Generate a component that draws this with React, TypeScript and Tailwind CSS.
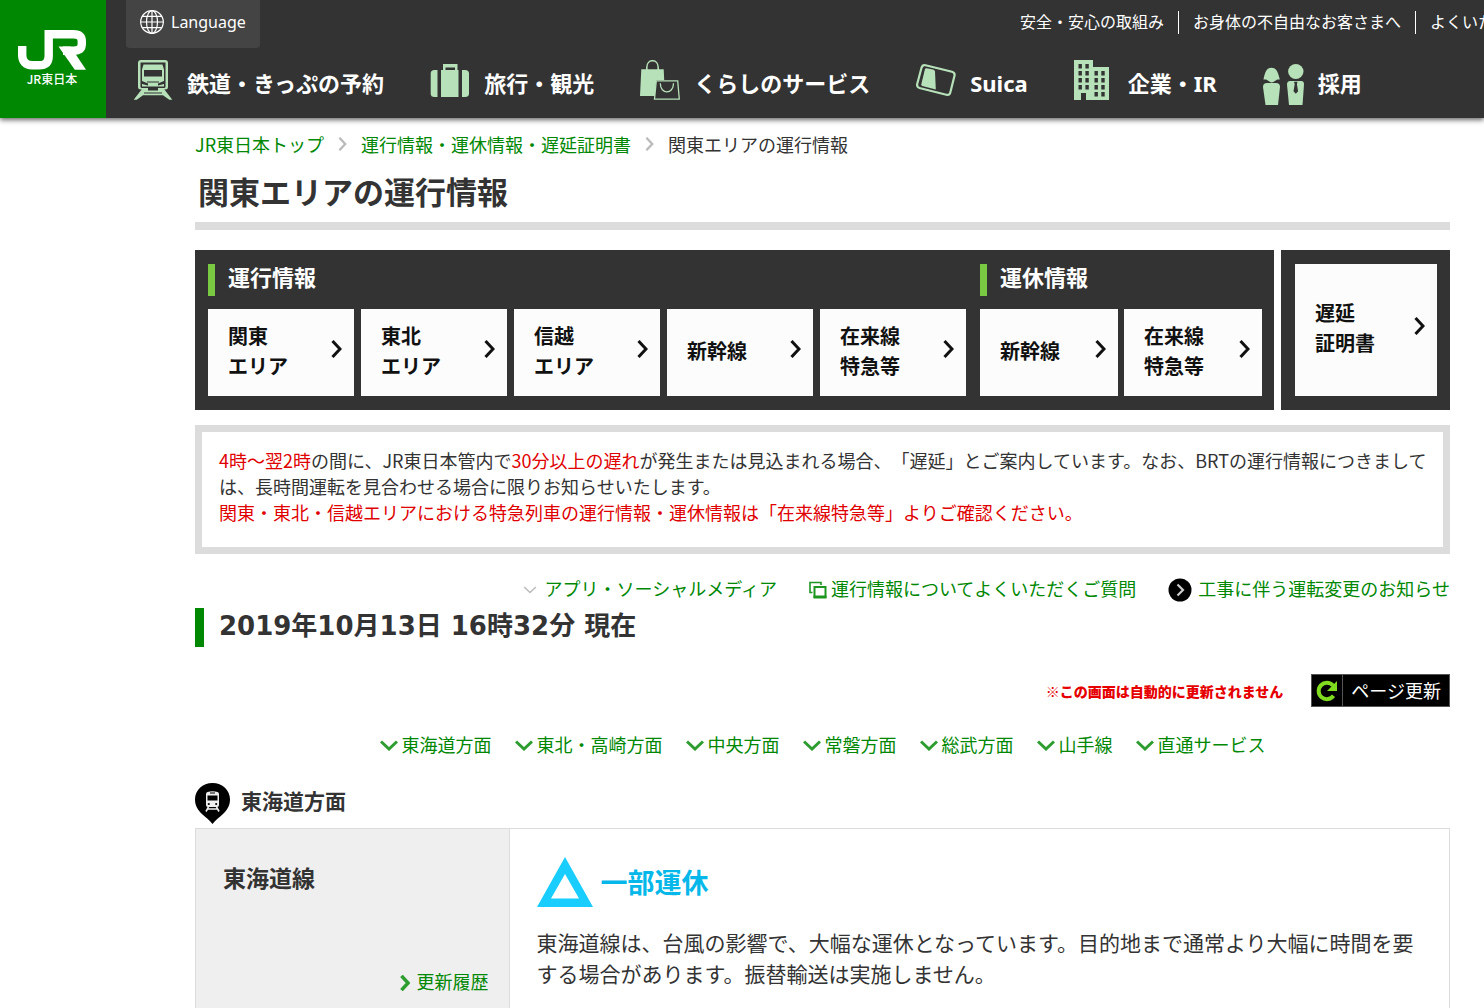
import type { ReactNode } from "react";

const LIGHT = "#b7e1b9";

function JrLogo() {
  return (
    <svg viewBox="0 0 68 40" className="mr-[2px] h-10 w-[68px]" fill="none" stroke="#fff" strokeWidth="8.4" aria-hidden="true">
      <path d="M4.2 16v9c0 6.500 3.500 10.300 10 10.300h6.500c7 0 10-3.300 10-9.300V4.200h24.500c6 0 8.600 2.600 8.600 7.300v2.200c0 4.700-2.800 7-8.600 7H45" />
      <path d="M40.500 16.500h12L68 39.700H56.800z" fill="#fff" stroke="none" />
    </svg>
  );
}

function GlobeIcon() {
  return (
    <svg viewBox="0 0 24 24" className="size-6" fill="none" stroke="#fff" strokeWidth="1.2" aria-hidden="true">
      <circle cx="12" cy="12" r="11.300" />
      <ellipse cx="12" cy="12" rx="5.500" ry="11.300" />
      <path d="M12 .7v22.600M.7 12h22.600M2.300 6.300h19.400M2.300 17.700h19.400" />
    </svg>
  );
}

function TrainIcon() {
  return (
    <svg viewBox="0 0 40 40" className="size-10" aria-hidden="true">
      <path d="M8 0h24q3 0 3 3v24q0 2.500-3 2.500H8q-3 0-3-2.500V3q0-3 3-3z" fill={LIGHT} />
      <path d="M7.500 2.500h25v24q0 1.500-1.500 1.500H9q-1.500 0-1.500-1.500z" fill="#333" />
      <path d="M10.500 4.500h19l1.500 5v17H9v-17z" fill={LIGHT} />
      <path d="M11 10h18v6.500H11zM9 21l6 2.500v2L9 24zM31 21l-6 2.500v2l6-1.500zM14 21.500h12v1H14z" fill="#333" />
      <path d="M9 29l-8.300 10.800h3L9 36h22l5.300 3.800h3L31 29z" fill={LIGHT} />
      <path d="M15 27.800h10v2.600H15zM11 32.500h18v1H11zM9.500 35h21v.8h-21z" fill="#333" />
    </svg>
  );
}

function SuitcaseIcon() {
  return (
    <svg viewBox="0 0 40 40" className="size-10" fill={LIGHT} aria-hidden="true">
      <path d="M7.500 10v27H4.500Q.7 37 .7 33.500v-20Q.7 10 4.500 10zM32 10h3q4 0 4 3.500v20q0 3.500-4 3.500h-3zM11 10h17.500v27H11z" />
      <path d="M13 4h14.500v6.500H25v-3H15.500v3H13z" />
    </svg>
  );
}

function BagsIcon() {
  return (
    <svg viewBox="0 0 40 40" className="size-10" aria-hidden="true">
      <path d="M1.300 9.300h22.400l.5 11h-8L15 36H0z" fill={LIGHT} />
      <path d="M6.800 10V7.500C6.800-1.500 18.200-1.500 18.200 7.500V10" fill="none" stroke={LIGHT} strokeWidth="1.600" />
      <path d="M16.300 20.800h21.400l1.600 18.400H14.500z" fill="#333" stroke={LIGHT} strokeWidth="1.300" />
      <path d="M20.300 23.300c0 11.500 13.200 11.500 13.200 0" fill="none" stroke={LIGHT} strokeWidth="1.300" />
    </svg>
  );
}

function CardIcon() {
  return (
    <svg viewBox="0 0 40 40" className="size-10" aria-hidden="true">
      <path d="M9.500 5.300l26.500 6.500q3.200 1 2.500 4L34.300 32.500q-.8 3-4 2.200L3.500 28Q.5 27 1.200 24L5.500 7.800Q6.500 4.600 9.500 5.300z" fill="none" stroke={LIGHT} strokeWidth="2.200" />
      <path d="M10.500 8.200l6.500 1.200q1.800.5 2 2l.8 18L6.300 26q-1.300-.5-1-1.800L9 9q.4-1 1.500-.8z" fill={LIGHT} />
    </svg>
  );
}

function BuildingIcon() {
  const panes = [
    ...[4, 11, 18, 25].flatMap((y) => [4.5, 11.4].map((x) => ({ x, y }))),
    ...[11, 18, 25, 32].flatMap((y) => [20.5, 27.3].map((x) => ({ x, y }))),
  ];
  return (
    <svg viewBox="0 0 40 40" className="size-10" aria-hidden="true">
      <path d="M0 0h19v7h16v33H12v-7H7v7H0z" fill={LIGHT} />
      {panes.map(({ x, y }) => (
        <rect key={`${x}-${y}`} x={x} y={y} width="3.400" height="4.500" fill="#333" />
      ))}
    </svg>
  );
}

function PeopleIcon() {
  return (
    <svg viewBox="0 -3 41 45" className="h-[45px] w-[41px]" fill={LIGHT} aria-hidden="true">
      <path d="M.5 16.500C2 9 3.500 4.800 8.500 4.800S15 9 16.800 16.500c-3-.3-3.500.5-4.800 1.500a5 5 0 0 1-6.500 0C4.500 17 3.500 16.200.5 16.500z" />
      <path d="M4 20h9q4 0 4 4l-2 18H2.500L0 24q0-4 4-4z" />
      <ellipse cx="32.800" cy="8.500" rx="7.700" ry="7.500" />
      <path d="M27 18h11.500q2.500 0 2.500 3.500L39.500 42H26l-2-20.500q0-3.500 3-3.500z" />
      <path d="M31 18.800h3.500l-.6 2.500 1.200 7-2.300 2.500-2.300-2.500 1.200-7z" fill="#333" />
    </svg>
  );
}

function Chevron({ className, width = 3, down = false }: { className: string; width?: number; down?: boolean }) {
  return (
    <svg viewBox={down ? "0 0 18 11" : "0 0 11 18"} className={className} fill="none" stroke="currentColor" strokeWidth={width} aria-hidden="true">
      <path d={down ? "M1 1.500l8 7.500 8-7.500" : "M1.500 1l7.500 8-7.500 8"} />
    </svg>
  );
}

function WindowsIcon() {
  return (
    <svg viewBox="0 0 18 18" className="mt-[3px] size-[18px] shrink-0" fill="none" stroke="#1c961e" aria-hidden="true">
      <path d="M3.500 11.500H1V1.500h11V4" strokeWidth="1.600" />
      <path d="M5.500 6h11v10h-11z" strokeWidth="2" />
      <path d="M4.500 16h13" strokeWidth="3" />
    </svg>
  );
}

function RoundArrowIcon() {
  return (
    <svg viewBox="0 0 24 24" className="mt-1 size-6 shrink-0" aria-hidden="true">
      <circle cx="12" cy="12" r="11.500" fill="#000" />
      <path d="M9.500 6.500L15 12l-5.500 5.500" fill="none" stroke="#ccc" strokeWidth="2.200" />
    </svg>
  );
}

function ReloadIcon() {
  return (
    <svg viewBox="0 0 24 24" className="size-6" aria-hidden="true">
      <path d="M18.500 16.800A8.200 8.200 0 1 1 18 6.500" fill="none" stroke="#7fdc1e" strokeWidth="4" />
      <path d="M22 2v10H12z" fill="#7fdc1e" />
    </svg>
  );
}

function PinIcon() {
  return (
    <svg viewBox="0 0 35 41" className="h-[41px] w-[35px]" aria-hidden="true">
      <path d="M17.500 0C27.500 0 35 7.200 35 16.500c0 7-3.500 11-7 14.500-3.700 3.500-7.500 6-10.500 10-3-4-6.800-6.500-10.500-10C3.500 27.500 0 23.500 0 16.500 0 7.200 7.500 0 17.500 0z" fill="#000" />
      <path d="M12.500 9q5-1.500 10 0 1.500.5 1.500 2v11q0 2-2 2h-9q-2 0-2-2V11q0-1.500 1.500-2z" fill="#eee" />
      <path d="M12.500 12.500h10v5h-10zM15 9.500h5v1h-5z" fill="#000" />
      <circle cx="13.800" cy="21" r="1.100" fill="#000" />
      <circle cx="21.200" cy="21" r="1.100" fill="#000" />
      <path d="M13.500 24l-2.500 4.500M21.500 24l2.500 4.500M12.500 26h10" stroke="#eee" strokeWidth="1.600" />
    </svg>
  );
}

const globalNav: { label: string; icon: ReactNode }[] = [
  { label: "鉄道・きっぷの予約", icon: <TrainIcon /> },
  { label: "旅行・観光", icon: <SuitcaseIcon /> },
  { label: "くらしのサービス", icon: <BagsIcon /> },
  { label: "Suica", icon: <CardIcon /> },
  { label: "企業・IR", icon: <BuildingIcon /> },
  { label: "採用", icon: <PeopleIcon /> },
];

const utilityLinks = ["安全・安心の取組み", "お身体の不自由なお客さまへ", "よくいただくご質問"];

const directions = ["東海道方面", "東北・高崎方面", "中央方面", "常磐方面", "総武方面", "山手線", "直通サービス"];

function Tile({ lines }: { lines: string[] }) {
  return (
    <a href="#" className="flex min-h-[87px] flex-1 items-center justify-between bg-[#fcfcfc] pr-3 pb-1 pl-5 text-xl leading-[30px] font-bold text-[#111]">
      <span>
        {lines.map((line) => (
          <span key={line} className="block whitespace-nowrap">
            {line}
          </span>
        ))}
      </span>
      <Chevron className="mb-1 h-[18px] w-[11px]" />
    </a>
  );
}

function TileHeading({ children }: { children: string }) {
  return (
    <h2 className="mb-[13px] h-8 border-l-[7px] border-[#7ac943] pl-[13px] text-[22px] leading-6 font-bold text-white">
      {children}
    </h2>
  );
}

function Header() {
  return (
    <header className="flex h-[118px] bg-[#333] text-white shadow-[0_2px_5px_rgba(0,0,0,0.6)]">
      <a href="#" className="flex w-[106px] shrink-0 flex-col items-center bg-[#008803] pt-[30px]">
        <JrLogo />
        <span className="mr-[2px] text-xs leading-[18px] font-medium">JR東日本</span>
      </a>
      <div className="min-w-0 flex-1 pl-5">
        <div className="flex items-start">
          <button type="button" className="flex h-12 items-start gap-[7px] rounded-b bg-[#444] px-[14px] pt-[10px] font-['Noto_Sans','Noto_Sans_CJK_JP',sans-serif] text-base leading-6">
            <GlobeIcon />
            Language
          </button>
          <ul className="ml-auto flex w-[479px] overflow-hidden pt-[11px] text-base leading-5 whitespace-nowrap">
            {utilityLinks.map((label) => (
              <li key={label} className="border-l border-white px-[14px] pb-[3px] first:border-transparent">
                <a href="#">{label}</a>
              </li>
            ))}
          </ul>
        </div>
        <nav className="flex gap-[46px] overflow-hidden pt-3 pl-[7px] font-['Noto_Sans','Noto_Sans_CJK_JP',sans-serif] text-[22px] leading-[46px] font-bold whitespace-nowrap">
          {globalNav.map(({ label, icon }) => (
            <a key={label} href="#" className="flex gap-[14px]">
              {icon}
              {label}
            </a>
          ))}
        </nav>
      </div>
    </header>
  );
}

export default function App() {
  return (
    <div className="bg-white font-['Noto_Sans_CJK_JP',sans-serif] text-lg text-[#333]">
      <Header />
      <main className="pr-[34px] pb-10 pl-[195px]">
        <nav className="flex items-center gap-[14px] pt-[13px] leading-[26px]">
          <a href="#" className="text-[#008803]">JR東日本トップ</a>
          <Chevron className="h-[14px] w-[9px] text-[#bbb]" />
          <a href="#" className="text-[#008803]">運行情報・運休情報・遅延証明書</a>
          <Chevron className="h-[14px] w-[9px] text-[#bbb]" />
          <span>関東エリアの運行情報</span>
        </nav>
        <h1 className="mt-[15px] border-b-8 border-[#dcdcdc] pb-3 pl-[3px] text-[31px] leading-[38px] font-bold">
          関東エリアの運行情報
        </h1>

        <div className="mt-5 grid grid-cols-[1079fr_169fr] gap-[7px]">
          <div className="grid grid-cols-[758fr_282fr] gap-[14px] bg-[#333] py-[14px] pr-3 pl-[13px]">
            <section>
              <TileHeading>運行情報</TileHeading>
              <div className="flex gap-[7px]">
                <Tile lines={["関東", "エリア"]} />
                <Tile lines={["東北", "エリア"]} />
                <Tile lines={["信越", "エリア"]} />
                <Tile lines={["新幹線"]} />
                <Tile lines={["在来線", "特急等"]} />
              </div>
            </section>
            <section>
              <TileHeading>運休情報</TileHeading>
              <div className="flex gap-[6px]">
                <Tile lines={["新幹線"]} />
                <Tile lines={["在来線", "特急等"]} />
              </div>
            </section>
          </div>
          <div className="flex bg-[#333] py-[14px] pr-[13px] pl-[14px]">
            <Tile lines={["遅延", "証明書"]} />
          </div>
        </div>

        <p className="mt-[15px] border-7 border-[#dcdcdc] pt-[15px] pr-2 pb-[22px] pl-[17px] leading-[26px] [text-spacing-trim:space-all]">
          <span className="text-[#e00000]">4時～翌2時</span>の間に、JR東日本管内で<span className="text-[#e00000]">30分以上の遅れ</span>が発生または見込まれる場合、「遅延」とご案内しています。なお、BRTの運行情報につきましては、長時間運転を見合わせる場合に限りお知らせいたします。
          <br />
          <span className="text-[#e00000]">関東・東北・信越エリアにおける特急列車の運行情報・運休情報は「在来線特急等」よりご確認ください。</span>
        </p>

        <ul className="mt-[22px] flex justify-end gap-8 leading-6 whitespace-nowrap text-[#008803]">
          <li>
            <a href="#" className="flex h-6 items-center gap-2">
              <Chevron down width={2} className="mt-1 h-2 w-[14px] text-[#bbb]" />
              アプリ・ソーシャルメディア
            </a>
          </li>
          <li>
            <a href="#" className="flex h-6 items-center gap-1">
              <WindowsIcon />
              運行情報についてよくいただくご質問
            </a>
          </li>
          <li>
            <a href="#" className="flex h-6 items-center gap-[6px]">
              <RoundArrowIcon />
              工事に伴う運転変更のお知らせ
            </a>
          </li>
        </ul>

        <h2 className="mt-2 border-l-9 border-[#008803] pb-[3px] pl-[15px] font-['DejaVu_Sans','Noto_Sans_CJK_JP',sans-serif] text-[26px] leading-9 font-bold">
          2019年10月13日 16時32分 現在
        </h2>

        <div className="mt-[27px] flex items-center justify-end gap-7">
          <p className="text-sm leading-5 font-black text-[#e60000]">※この画面は自動的に更新されません</p>
          <button type="button" className="flex h-[33px] border border-[#555] bg-black text-lg leading-[30px] text-white">
            <span className="flex h-full w-[31px] items-center justify-center border-r border-[#555]">
              <ReloadIcon />
            </span>
            <span className="px-2">ページ更新</span>
          </button>
        </div>

        <nav className="mt-6 flex justify-center gap-[23px] leading-[26px] whitespace-nowrap text-[#008803]">
          {directions.map((label) => (
            <a key={label} href="#" className="flex items-center gap-1">
              <Chevron down className="mt-[2px] h-[11px] w-[18px] text-[#2d9d2f]" />
              {label}
            </a>
          ))}
        </nav>

        <h3 className="mt-[26px] mb-1 flex items-center gap-[11px] text-[21px] leading-8 font-bold">
          <PinIcon />
          <span className="pb-2">東海道方面</span>
        </h3>
        <table className="w-full border-collapse">
          <tbody>
            <tr>
              <th scope="row" className="w-1/4 border border-[#dcdcdc] bg-[#efefef] px-5 pt-[30px] pb-8 text-left align-top font-normal">
                <span className="mb-[72px] block pl-[7px] text-[23px] leading-9 font-bold">東海道線</span>
                <a href="#" className="flex items-center justify-end gap-[7px] leading-7 text-[#008803]">
                  <Chevron width={4} className="mt-1 h-4 w-[10px] text-[#2d9d2f]" />
                  更新履歴
                </a>
              </th>
              <td className="border border-[#dcdcdc] px-[27px] pt-7 pb-4 align-top">
                <div className="mb-5 flex items-center gap-2 text-[27px] leading-[50px] font-bold text-[#06b8ea]">
                  <svg viewBox="0 0 56 50" className="h-[50px] w-14" aria-hidden="true">
                    <path fillRule="evenodd" d="M28 0L56 50H0zM28 17L14 41.500h28z" fill="#19cdff" />
                  </svg>
                  一部運休
                </div>
                <p className="text-[21px] leading-[31px] [text-spacing-trim:space-all]">
                  東海道線は、台風の影響で、大幅な運休となっています。目的地まで通常より大幅に時間を要する場合があります。振替輸送は実施しません。
                </p>
              </td>
            </tr>
          </tbody>
        </table>
      </main>
    </div>
  );
}
